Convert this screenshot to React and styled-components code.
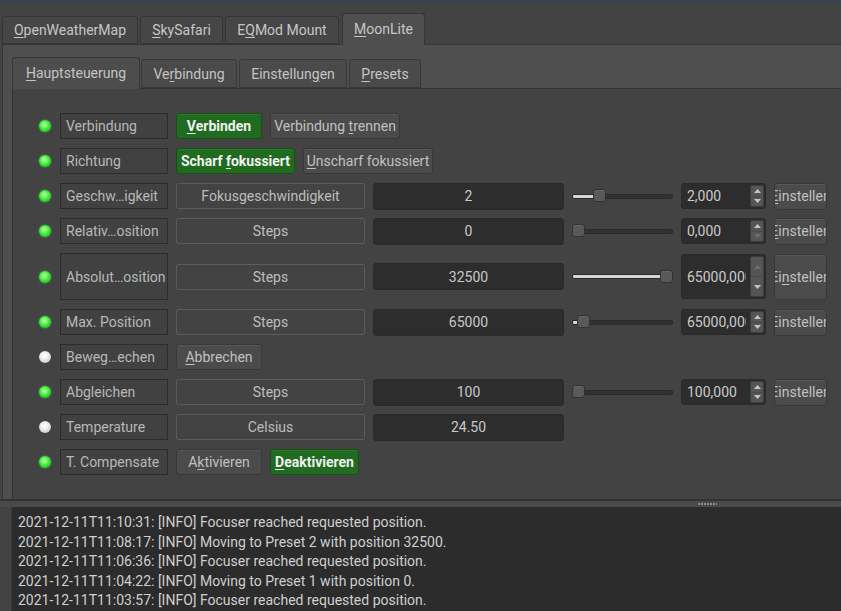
import React from 'react';
import styled, { createGlobalStyle, css } from 'styled-components';

const Global = createGlobalStyle`
  *, *::before, *::after { box-sizing: border-box; }
  html, body { margin: 0; padding: 0; background: #434343; overflow: hidden; }
  body { font-family: Roboto, "Noto Sans", sans-serif; font-size: 14px; color: #c4c4c4; }
  #root { width: 841px; height: 611px; }
`;

const Window = styled.div`
  width: 841px;
  height: 611px;
  display: flex;
  flex-direction: column;
  background: #434343;
  overflow: hidden;
`;

const TopStripe = styled.div`
  flex: none;
  height: 3px;
  background: #3a434c;
`;

const TopArea = styled.div`
  flex: none;
  height: 496px;
  display: flex;
  flex-direction: column;
  padding-left: 2px;
`;

const OuterTabBar = styled.div`
  flex: none;
  height: 41px;
  display: flex;
  align-items: flex-end;
  gap: 2px;
  position: relative;
  z-index: 1;
`;

const OuterTab = styled.div`
  width: ${p => p.$w}px;
  height: ${p => (p.$active ? '32px' : '28px')};
  margin-bottom: ${p => (p.$active ? '-1px' : '0')};
  margin-left: ${p => (p.$active ? '1px' : '0')};
  padding-bottom: ${p => (p.$active ? '2px' : '0')};
  display: flex;
  align-items: center;
  justify-content: center;
  white-space: nowrap;
  color: #c6c6c6;
  background: ${p => (p.$active ? '#4f4f4f' : '#464646')};
  border: 1px solid #353535;
  border-bottom: ${p => (p.$active ? 'none' : '1px solid #353535')};
  border-radius: 3px 3px 0 0;
`;

const OuterPane = styled.div`
  flex: 1;
  min-height: 0;
  display: flex;
  flex-direction: column;
  background: #4f4f4f;
  border-top: 1px solid #353535;
  border-left: 1px solid #353535;
  padding: 12px 0 0 9px;
`;

const InnerTabBar = styled.div`
  flex: none;
  height: 31px;
  display: flex;
  align-items: flex-end;
  gap: 2px;
  position: relative;
  z-index: 1;
`;

const InnerTab = styled.div`
  width: ${p => p.$w}px;
  height: ${p => (p.$active ? '32px' : '29px')};
  margin-bottom: ${p => (p.$active ? '-1px' : '0')};
  margin-right: ${p => (p.$active ? '-1px' : '0')};
  padding-bottom: ${p => (p.$active ? '2px' : '0')};
  display: flex;
  align-items: center;
  justify-content: center;
  white-space: nowrap;
  color: #c4c4c4;
  background: ${p => (p.$active ? '#4d4d4d' : '#4a4a4a')};
  border: 1px solid #383838;
  border-bottom: ${p => (p.$active ? 'none' : '1px solid #383838')};
  border-radius: 3px 3px 0 0;
`;

const InnerPane = styled.div`
  flex: 1;
  min-height: 0;
  background: #434343;
  border-top: 1px solid #333333;
  border-left: 1px solid #333333;
  padding: 24px 0 0 26px;
  overflow: hidden;
`;

const Rows = styled.div`
  display: flex;
  flex-direction: column;
  gap: 9px;
`;

const Row = styled.div`
  height: ${p => (p.$tall ? '47px' : '26px')};
  display: flex;
  align-items: center;
  gap: 8px;
`;

const LedSlot = styled.div`
  width: 13px;
  flex: none;
  display: flex;
  align-items: center;
`;

const Led = styled.div`
  width: 12px;
  height: 12px;
  border-radius: 50%;
  ${p =>
    p.$on
      ? css`
          background: radial-gradient(circle at 45% 40%, #eaffe0 0%, #8cff7c 18%, #3fee3a 45%, #22c022 80%, #189018 100%);
          box-shadow: 0 0 2px rgba(90, 255, 90, 0.6);
        `
      : css`
          background: radial-gradient(circle at 45% 40%, #ffffff 0%, #f2f2f2 30%, #d0d0d0 70%, #a0a0a0 100%);
          box-shadow: 0 0 1px rgba(0, 0, 0, 0.4);
        `}
`;

const LabelBox = styled.div`
  width: 108px;
  height: 100%;
  flex: none;
  display: flex;
  align-items: center;
  padding-left: 5px;
  white-space: nowrap;
  overflow: hidden;
  color: #b8b8b8;
  background: #414141;
  border: 1px solid #2c2c2c;
`;

const Button = styled.div`
  width: ${p => p.$w}px;
  height: 26px;
  flex: none;
  display: flex;
  align-items: center;
  justify-content: center;
  white-space: nowrap;
  border-radius: 3px;
  ${p =>
    p.$green
      ? css`
          color: #f0f0f0;
          font-weight: 700;
          background: #216b21;
          border: 1px solid #174f17;
          box-shadow: inset 0 1px 0 #2a7a2a;
        `
      : css`
          color: #c0c0c0;
          background: #4b4b4b;
          border: 1px solid #383838;
          box-shadow: inset 0 1px 0 #575757;
        `}
`;

const UnitBox = styled.div`
  width: 189px;
  height: 26px;
  flex: none;
  display: flex;
  align-items: center;
  justify-content: center;
  color: #bdbdbd;
  background: #434343;
  border: 1px solid #5b5b5b;
  border-radius: 2px;
`;

const ValueBox = styled.div`
  width: 191px;
  height: 27px;
  flex: none;
  display: flex;
  align-items: center;
  justify-content: center;
  color: #c8c8c8;
  background: #2d2d2d;
  border: 1px solid #2a2a2a;
  border-radius: 3px;
`;

const Slider = styled.div`
  width: 101px;
  height: 14px;
  flex: none;
  display: flex;
  align-items: center;
  position: relative;
`;

const Groove = styled.div`
  width: 100%;
  height: 5px;
  display: flex;
  background: #313131;
  border: 1px solid #2a2a2a;
  border-radius: 2px;
  overflow: hidden;
`;

const GrooveFill = styled.div`
  height: 100%;
  background: #d6d6d6;
`;

const Handle = styled.div`
  position: absolute;
  top: 0;
  width: 13px;
  height: 13px;
  background: #595959;
  border: 1px solid #323232;
  border-radius: 3px;
  box-shadow: inset 0 1px 0 #666666;
`;

const Spin = styled.div`
  width: 85px;
  height: ${p => (p.$tall ? '45px' : '26px')};
  flex: none;
  display: flex;
  background: #2d2d2d;
  border: 1px solid #2a2a2a;
  border-radius: 3px;
  overflow: hidden;
`;

const SpinText = styled.div`
  flex: 1;
  min-width: 0;
  display: flex;
  align-items: center;
  padding-left: 5px;
  margin-right: 3px;
  white-space: nowrap;
  overflow: hidden;
  color: #cacaca;
`;

const SpinButtons = styled.div`
  width: 14px;
  flex: none;
  display: flex;
  flex-direction: column;
  margin: 1px;
  background: #555555;
  border: 1px solid #3c3c3c;
  border-radius: 2px;
`;

const SpinArrow = styled.div`
  flex: 1;
  display: flex;
  align-items: center;
  justify-content: center;
  & + & {
    border-top: 1px solid #4a4a4a;
  }
  svg {
    fill: ${p => (p.$dim ? '#6e6e6e' : '#c4c4c4')};
  }
`;

const SetButton = styled.div`
  width: 53px;
  height: ${p => (p.$tall ? '46px' : '27px')};
  flex: none;
  display: flex;
  align-items: center;
  justify-content: center;
  white-space: nowrap;
  overflow: hidden;
  color: #c0c0c0;
  background: #4b4b4b;
  border: 1px solid #383838;
  border-radius: 3px;
  box-shadow: inset 0 1px 0 #575757;
  span {
    flex: none;
  }
`;

const Mn = styled.span`
  text-decoration: underline;
  text-decoration-thickness: 1px;
  text-underline-offset: 2px;
`;

const Splitter = styled.div`
  flex: none;
  height: 8px;
  display: flex;
  align-items: center;
  background: #4a4a4a;
  border-top: 2px solid #333333;
`;

const SplitterGrip = styled.div`
  width: 19px;
  height: 2px;
  margin-left: 698px;
  background: repeating-linear-gradient(90deg, #8a8a8a 0 2px, transparent 2px 3px);
`;

const Log = styled.div`
  flex: 1;
  margin-left: 11px;
  padding: 6px 0 0 6px;
  background: #2c2c2c;
  border-left: 1px solid #3a3a3a;
  overflow: hidden;
`;

const LogLine = styled.div`
  line-height: 19.5px;
  white-space: nowrap;
  color: #cfcfcf;
`;

const Arrow = ({ up }) => (
  <svg width="7" height="4" viewBox="0 0 7 4">
    {up ? <path d="M0 4 L3.5 0 L7 4 Z" /> : <path d="M0 0 L3.5 4 L7 0 Z" />}
  </svg>
);

const SpinBox = ({ value, tall, dimUp, dimDown }) => (
  <Spin $tall={tall}>
    <SpinText>{value}</SpinText>
    <SpinButtons>
      <SpinArrow $dim={dimUp}>
        <Arrow up />
      </SpinArrow>
      <SpinArrow $dim={dimDown}>
        <Arrow />
      </SpinArrow>
    </SpinButtons>
  </Spin>
);

const RangeSlider = ({ pos }) => (
  <Slider>
    <Groove>
      <GrooveFill style={{ width: `${pos}px` }} />
    </Groove>
    <Handle style={{ left: `${pos}px` }} />
  </Slider>
);

const Setter = ({ tall, children }) => (
  <SetButton $tall={tall}>
    <span>{children}</span>
  </SetButton>
);

const logLines = [
  '2021-12-11T11:10:31: [INFO] Focuser reached requested position.',
  '2021-12-11T11:08:17: [INFO] Moving to Preset 2 with position 32500.',
  '2021-12-11T11:06:36: [INFO] Focuser reached requested position.',
  '2021-12-11T11:04:22: [INFO] Moving to Preset 1 with position 0.',
  '2021-12-11T11:03:57: [INFO] Focuser reached requested position.',
];

export default function App() {
  return (
    <>
      <Global />
      <Window>
        <TopStripe />
        <TopArea>
          <OuterTabBar>
            <OuterTab $w={136}><span><Mn>O</Mn>penWeatherMap</span></OuterTab>
            <OuterTab $w={83}><span><Mn>S</Mn>kySafari</span></OuterTab>
            <OuterTab $w={114}><span>E<Mn>Q</Mn>Mod Mount</span></OuterTab>
            <OuterTab $w={83} $active><span><Mn>M</Mn>oonLite</span></OuterTab>
          </OuterTabBar>
          <OuterPane>
            <InnerTabBar>
              <InnerTab $w={128} $active><span><Mn>H</Mn>auptsteuerung</span></InnerTab>
              <InnerTab $w={96}><span>Ve<Mn>r</Mn>bindung</span></InnerTab>
              <InnerTab $w={108}><span>Einstellun<Mn>g</Mn>en</span></InnerTab>
              <InnerTab $w={72}><span><Mn>P</Mn>resets</span></InnerTab>
            </InnerTabBar>
            <InnerPane>
              <Rows>
                <Row>
                  <LedSlot><Led $on /></LedSlot>
                  <LabelBox>Verbindung</LabelBox>
                  <Button $green $w={86}><span><Mn>V</Mn>erbinden</span></Button>
                  <Button $w={130}><span>Verbindung <Mn>t</Mn>rennen</span></Button>
                </Row>
                <Row>
                  <LedSlot><Led $on /></LedSlot>
                  <LabelBox>Richtung</LabelBox>
                  <Button $green $w={119}><span>Scharf <Mn>f</Mn>okussiert</span></Button>
                  <Button $w={130}><span><Mn>U</Mn>nscharf fokussiert</span></Button>
                </Row>
                <Row>
                  <LedSlot><Led $on /></LedSlot>
                  <LabelBox>Geschw…igkeit</LabelBox>
                  <UnitBox>Fokusgeschwindigkeit</UnitBox>
                  <ValueBox>2</ValueBox>
                  <RangeSlider pos={21} />
                  <SpinBox value="2,000" />
                  <Setter><Mn>E</Mn>instellen</Setter>
                </Row>
                <Row>
                  <LedSlot><Led $on /></LedSlot>
                  <LabelBox>Relativ…osition</LabelBox>
                  <UnitBox>Steps</UnitBox>
                  <ValueBox>0</ValueBox>
                  <RangeSlider pos={0} />
                  <SpinBox value="0,000" dimDown />
                  <Setter><Mn>E</Mn>instellen</Setter>
                </Row>
                <Row $tall>
                  <LedSlot><Led $on /></LedSlot>
                  <LabelBox>Absolut…osition</LabelBox>
                  <UnitBox>Steps</UnitBox>
                  <ValueBox>32500</ValueBox>
                  <RangeSlider pos={88} />
                  <SpinBox value="65000,000" tall dimUp />
                  <Setter tall>Ei<Mn>n</Mn>stellen</Setter>
                </Row>
                <Row>
                  <LedSlot><Led $on /></LedSlot>
                  <LabelBox>Max. Position</LabelBox>
                  <UnitBox>Steps</UnitBox>
                  <ValueBox>65000</ValueBox>
                  <RangeSlider pos={5} />
                  <SpinBox value="65000,000" />
                  <Setter>Einstellen</Setter>
                </Row>
                <Row>
                  <LedSlot><Led /></LedSlot>
                  <LabelBox>Beweg…echen</LabelBox>
                  <Button $w={86}><span><Mn>A</Mn>bbrechen</span></Button>
                </Row>
                <Row>
                  <LedSlot><Led $on /></LedSlot>
                  <LabelBox>Abgleichen</LabelBox>
                  <UnitBox>Steps</UnitBox>
                  <ValueBox>100</ValueBox>
                  <RangeSlider pos={0} />
                  <SpinBox value="100,000" />
                  <Setter>Einstellen</Setter>
                </Row>
                <Row>
                  <LedSlot><Led /></LedSlot>
                  <LabelBox>Temperature</LabelBox>
                  <UnitBox>Celsius</UnitBox>
                  <ValueBox>24.50</ValueBox>
                </Row>
                <Row>
                  <LedSlot><Led $on /></LedSlot>
                  <LabelBox>T. Compensate</LabelBox>
                  <Button $w={86}><span>A<Mn>k</Mn>tivieren</span></Button>
                  <Button $green $w={89}><span><Mn>D</Mn>eaktivieren</span></Button>
                </Row>
              </Rows>
            </InnerPane>
          </OuterPane>
        </TopArea>
        <Splitter>
          <SplitterGrip />
        </Splitter>
        <Log>
          {logLines.map(l => (
            <LogLine key={l}>{l}</LogLine>
          ))}
        </Log>
      </Window>
    </>
  );
}
